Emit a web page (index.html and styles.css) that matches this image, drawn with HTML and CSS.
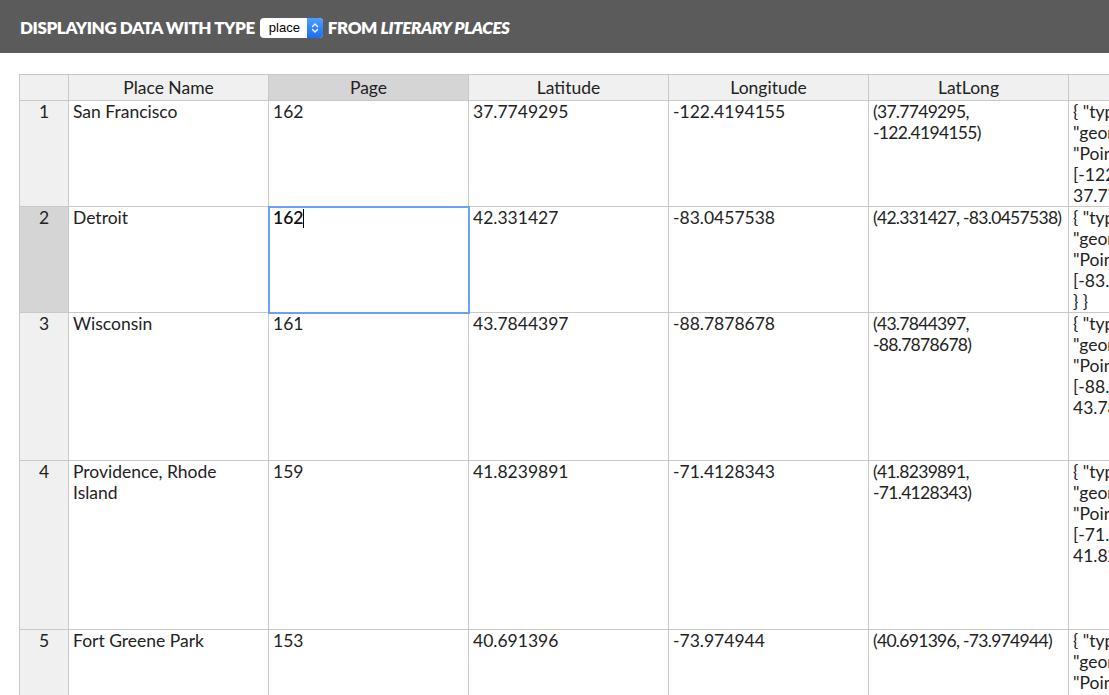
FILE: index.html
```html
<!DOCTYPE html>
<html>
<head>
<meta charset="utf-8">
<link rel="stylesheet" href="styles.css">
</head>
<body>
<header class="topbar">
  <span class="title">DISPLAYING DATA WITH TYPE</span>
  <span class="select"><span class="select-value">place</span><span class="select-arrow"><svg width="8" height="12" viewBox="0 0 8 12"><path d="M1.5 4.5 L4 2 L6.5 4.5 M1.5 7.5 L4 10 L6.5 7.5" fill="none" stroke="#fff" stroke-width="1.4" stroke-linecap="round" stroke-linejoin="round"/></svg></span></span>
  <span class="title">FROM <em>LITERARY PLACES</em></span>
</header>
<main class="content">
  <table class="grid">
    <colgroup>
      <col class="c-num"><col class="c-data"><col class="c-data"><col class="c-data"><col class="c-data"><col class="c-data"><col class="c-data">
    </colgroup>
    <thead>
      <tr>
        <th class="corner"></th>
        <th>Place Name</th>
        <th class="active-col">Page</th>
        <th>Latitude</th>
        <th>Longitude</th>
        <th>LatLong</th>
        <th></th>
      </tr>
    </thead>
    <tbody>
      <tr class="r1">
        <td class="num">1</td>
        <td>San Francisco</td>
        <td>162</td>
        <td>37.7749295</td>
        <td>-122.4194155</td>
        <td class="ll">(37.7749295,<br>-122.4194155)</td>
        <td class="json">{ "type": "Feature",<br>"geometry": { "type":<br>"Point", "coordinates":<br>[-122.4194155,<br>37.7749295] } }</td>
      </tr>
      <tr class="r2">
        <td class="num active-row">2</td>
        <td>Detroit</td>
        <td class="editing"><span class="edit-text">162</span><span class="caret"></span></td>
        <td>42.331427</td>
        <td>-83.0457538</td>
        <td class="ll">(42.331427, -83.0457538)</td>
        <td class="json">{ "type": "Feature",<br>"geometry": { "type":<br>"Point", "coordinates":<br>[-83.0457538, 42.331427]<br>} }</td>
      </tr>
      <tr class="r3">
        <td class="num">3</td>
        <td>Wisconsin</td>
        <td>161</td>
        <td>43.7844397</td>
        <td>-88.7878678</td>
        <td class="ll">(43.7844397,<br>-88.7878678)</td>
        <td class="json">{ "type": "Feature",<br>"geometry": { "type":<br>"Point", "coordinates":<br>[-88.7878678,<br>43.7844397] } }</td>
      </tr>
      <tr class="r4">
        <td class="num">4</td>
        <td>Providence, Rhode Island</td>
        <td>159</td>
        <td>41.8239891</td>
        <td>-71.4128343</td>
        <td class="ll">(41.8239891,<br>-71.4128343)</td>
        <td class="json">{ "type": "Feature",<br>"geometry": { "type":<br>"Point", "coordinates":<br>[-71.4128343,<br>41.8239891] } }</td>
      </tr>
      <tr class="r5">
        <td class="num">5</td>
        <td>Fort Greene Park</td>
        <td>153</td>
        <td>40.691396</td>
        <td>-73.974944</td>
        <td class="ll">(40.691396, -73.974944)</td>
        <td class="json">{ "type": "Feature",<br>"geometry": { "type":<br>"Point", "coordinates":<br>[-73.974944, 40.691396]<br>} }</td>
      </tr>
    </tbody>
  </table>
</main>
</body>
</html>
```
FILE: styles.css
```css
html, body {
  margin: 0;
  padding: 0;
  overflow: hidden;
  width: 1109px;
  height: 695px;
  background: #fff;
  font-family: "Source Sans Pro", Lato, "Open Sans", sans-serif;
  color: #222;
}

.topbar {
  height: 53px;
  background: #5b5b5b;
  display: flex;
  align-items: center;
  padding: 0 0 0 20px;
  gap: 5px;
  box-sizing: border-box;
}

.title {
  color: #fff;
  font-weight: 800;
  font-size: 17px;
  letter-spacing: -0.4px;
  white-space: nowrap;
  padding-top: 1px;
}

.title em {
  font-style: italic;
}

.select {
  display: inline-flex;
  height: 20px;
  width: 63px;
  background: #fff;
  border-radius: 4px;
  overflow: hidden;
  margin-top: 3px;
}

.select-value {
  flex: 1;
  font-family: "Liberation Sans", Arial, sans-serif;
  font-size: 13px;
  color: #000;
  line-height: 20px;
  padding-left: 9px;
}

.select-arrow {
  width: 16px;
  background: linear-gradient(#4aa0ff, #1a6ef0);
  display: flex;
  align-items: center;
  justify-content: center;
}

.content {
  padding: 21px 0 0 19px;
}

.grid {
  border-collapse: collapse;
  table-layout: fixed;
  width: 1249px;
  font-size: 17.5px;
}

.c-num { width: 49px; }
.c-data { width: 200px; }

.grid th {
  background: #f0f0f0;
  border: 1px solid #c8c8c8;
  height: 25px;
  font-weight: 400;
  font-size: 17.5px;
  line-height: 20px;
  padding: 0;
  text-align: center;
  color: #222;
}

.grid th.active-col {
  background: #d5d5d5;
}

.grid td {
  border: 1px solid #c8c8c8;
  vertical-align: top;
  padding: 0 6px 0 4px;
  line-height: 21px;
  white-space: normal;
  overflow: hidden;
}

.grid td.num {
  background: #f0f0f0;
  text-align: center;
  padding-left: 0;
  padding-right: 0;
}

.grid td.num.active-row {
  background: #d5d5d5;
}

.grid td.json,
.grid td.ll {
  white-space: nowrap;
}

.grid td.ll {
  letter-spacing: -0.7px;
}

.r1 td, .r2 td { height: 105px; }
.r3 td { height: 147px; }
.r4 td { height: 168px; }
.r5 td { height: 80px; }

.grid td.editing {
  outline: 2px solid #6aa0f7;
  outline-offset: -1px;
}

.edit-text {
  font-weight: 600;
  color: #111;
}

.caret {
  display: inline-block;
  width: 1px;
  height: 19px;
  background: #000;
  vertical-align: -4px;
}
```
